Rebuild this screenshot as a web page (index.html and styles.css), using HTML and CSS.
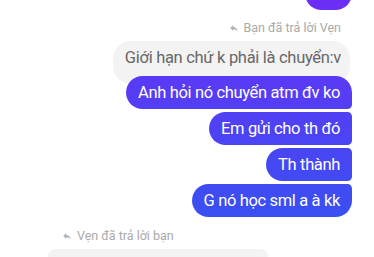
FILE: index.html
```html
<!DOCTYPE html>
<html lang="vi">
<head>
    <meta charset="UTF-8">
    <meta name="viewport" content="width=device-width, initial-scale=1.0">
    <title>Tin nhắn</title>
    <link rel="stylesheet" href="styles.css">
</head>
<body>
    <div class="thread">
        <div class="bubble out single top-cut"></div>

        <div class="reply-label out-label">
            <svg class="reply-icon" viewBox="0 0 24 24"><path d="M10 9V5l-7 7 7 7v-4.1c5 0 8.5 1.6 11 5.1-1-5-4-10-11-11z"/></svg>
            <span>Bạn đã trả lời Vẹn</span>
        </div>
        <div class="quote out-quote">Giới hạn chứ k phải là chuyển:v</div>

        <div class="group">
            <div class="bubble out first">Anh hỏi nó chuyển atm đv ko</div>
            <div class="bubble out middle">Em gửi cho th đó</div>
            <div class="bubble out middle">Th thành</div>
            <div class="bubble out last">G nó học sml a à kk</div>
        </div>

        <div class="reply-label in-label">
            <svg class="reply-icon" viewBox="0 0 24 24"><path d="M10 9V5l-7 7 7 7v-4.1c5 0 8.5 1.6 11 5.1-1-5-4-10-11-11z"/></svg>
            <span>Vẹn đã trả lời bạn</span>
        </div>
        <div class="quote in-quote"></div>
    </div>
</body>
</html>
```

FILE: styles.css
```css
html, body {
    overflow: hidden;
}

body {
    margin: 0;
    background: #fff;
    font-family: Roboto, "Noto Sans", Arial, sans-serif;
    height: 257px;
}

.thread {
    display: flex;
    flex-direction: column;
    align-items: flex-end;
    padding-right: 22px;
}

.group {
    display: flex;
    flex-direction: column;
    align-items: flex-end;
    gap: 3px;
    margin-top: -8px;
    position: relative;
}

.bubble {
    box-sizing: border-box;
    height: 33px;
    padding: 6px 12px 6px 12px;
    font-size: 16.5px;
    letter-spacing: -0.35px;
    line-height: 21px;
    color: #fff;
    white-space: nowrap;
}

.out {
    background: linear-gradient(to bottom, #6c2ef6, #3056f2) fixed;
}

.single {
    border-radius: 18px;
}

.first {
    border-radius: 18px 18px 5px 18px;
}

.middle {
    border-radius: 18px 5px 5px 18px;
}

.last {
    border-radius: 18px 5px 18px 18px;
}

.top-cut {
    width: 47px;
    margin-top: -23px;
}

.reply-label {
    display: flex;
    align-items: center;
    gap: 5px;
    font-size: 12.5px;
    line-height: 16px;
    color: #a9a9a9;
}

.reply-icon {
    width: 10px;
    height: 10px;
    fill: #b3b3b3;
}

.out-label {
    margin-top: 10px;
    padding-right: 11px;
}

.in-label {
    align-self: flex-start;
    margin-top: 11px;
    margin-left: 62px;
}

.quote {
    box-sizing: border-box;
    background: #f3f3f3;
    border-radius: 18px;
    color: #676767;
    font-size: 16.5px;
    letter-spacing: -0.3px;
    line-height: 20px;
    white-space: nowrap;
}

.out-quote {
    margin-top: 5px;
    margin-right: 2px;
    padding: 7px 9px 16px 12px;
}

.in-quote {
    align-self: flex-start;
    margin-top: 5px;
    margin-left: 48px;
    width: 220px;
    height: 8px;
    border-radius: 8px 8px 0 0;
}
```
